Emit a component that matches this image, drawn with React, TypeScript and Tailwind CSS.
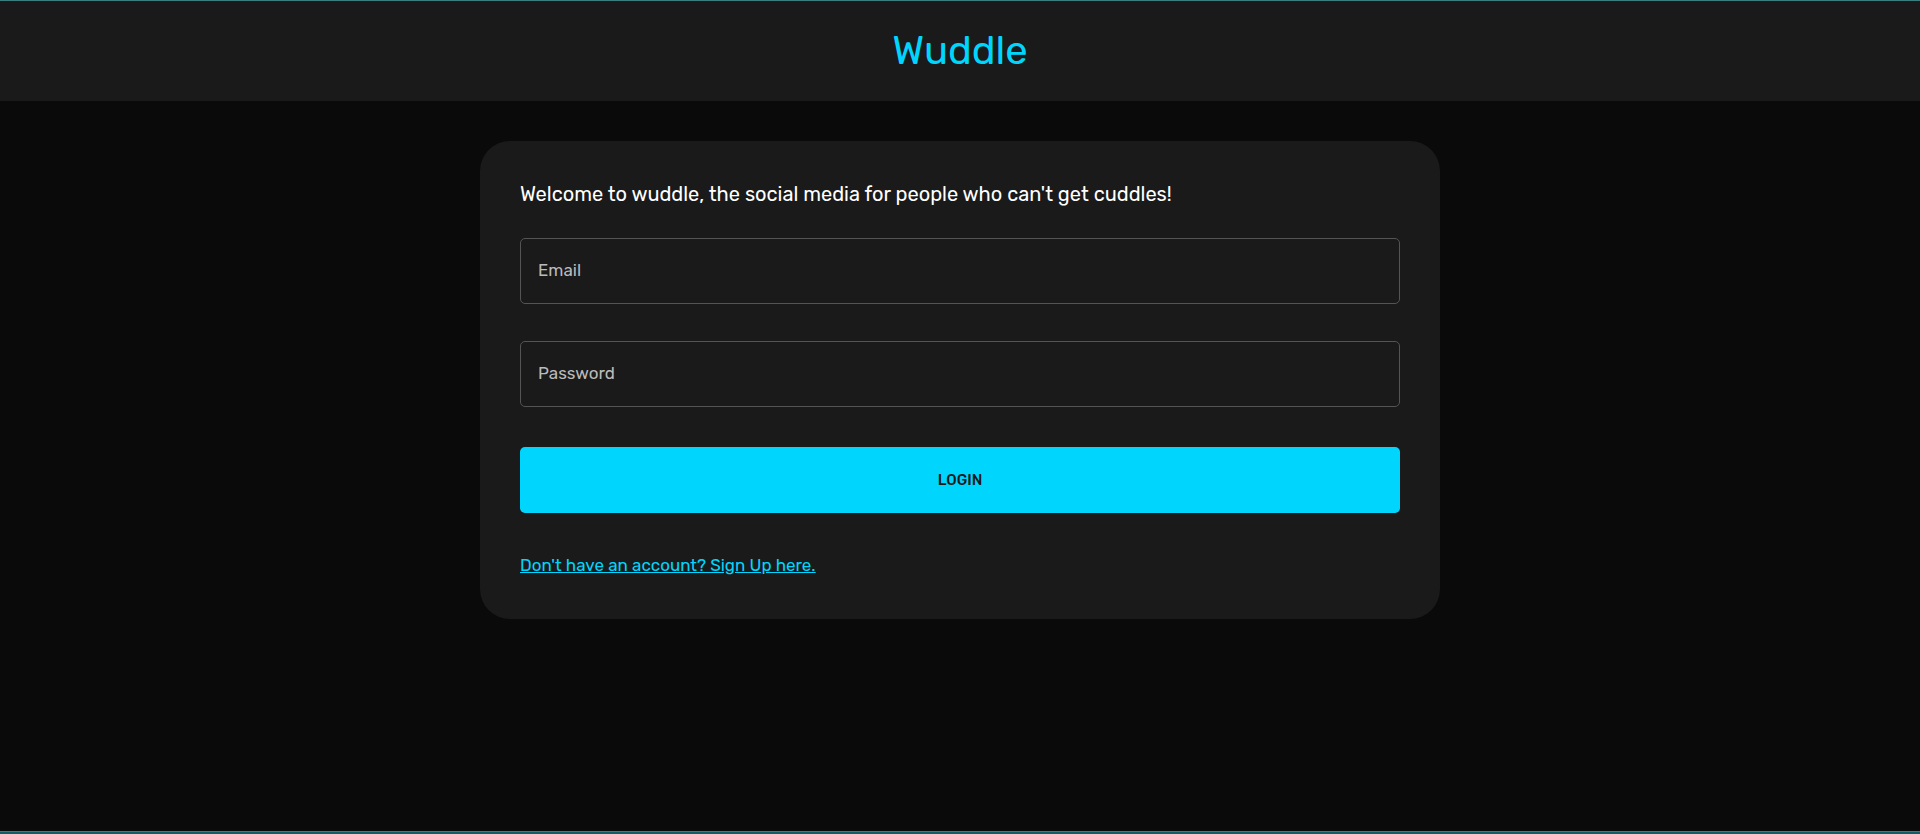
type FieldProps = {
  id: string;
  label: string;
  type: string;
};

function Field({ id, label, type }: FieldProps) {
  return (
    <div className="relative">
      <input
        id={id}
        name={id}
        type={type}
        placeholder=" "
        className="peer block h-[66px] w-full rounded-[5px] border border-[#545454] bg-transparent px-[17px] text-[17px] text-white outline-none focus:border-[#00d6fd]"
      />
      <label
        htmlFor={id}
        className="pointer-events-none absolute top-0 left-[18px] hidden text-[17px] leading-[64px] text-[#bbbbbb] peer-placeholder-shown:block"
      >
        {label}
      </label>
    </div>
  );
}

export default function App() {
  return (
    <div className="flex min-h-screen flex-col border-t border-[#3a7f80] bg-[#0a0a0a] font-['Rubik','Roboto',sans-serif] text-white">
      <header className="flex h-[100px] items-center justify-center bg-[#1a1a1a]">
        <h1 className="text-[40px] leading-[48px] text-[#00d6fd]">Wuddle</h1>
      </header>

      <main className="flex grow justify-center px-5 py-10">
        <form
          className="w-full max-w-[960px] self-start rounded-[30px] bg-[#1a1a1a] p-10"
          onSubmit={(event) => event.preventDefault()}
        >
          <h2 className="mb-[31px] text-xl leading-[26px]">
            Welcome to wuddle, the social media for people who can't get cuddles!
          </h2>
          <div className="flex flex-col gap-[37px]">
            <Field id="email" label="Email" type="email" />
            <Field id="password" label="Password" type="password" />
          </div>
          <button
            type="submit"
            className="mt-10 block h-[66px] w-full cursor-pointer rounded-[5px] bg-[#00d6fd] text-[15px] font-medium text-[#1a1a1a] uppercase"
          >
            Login
          </button>
          <a href="#signup" className="mt-10 mb-0.5 block w-fit text-[17px] leading-[24px] text-[#00d6fd] underline">
            Don't have an account? Sign Up here.
          </a>
        </form>
      </main>

      <footer className="h-[3px] border-t border-[#3a7f80] bg-[#0b5f66]" />
    </div>
  );
}
